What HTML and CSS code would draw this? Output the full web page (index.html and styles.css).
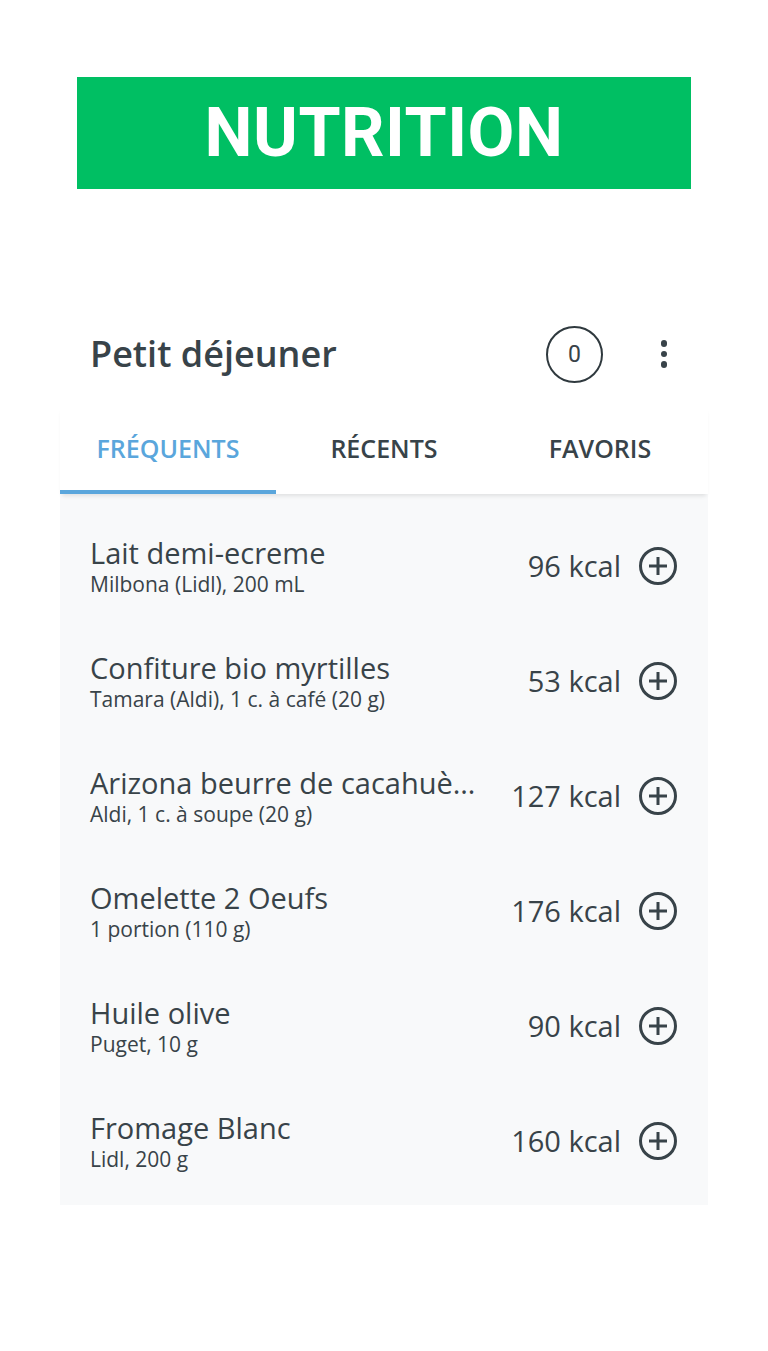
FILE: index.html
```html
<!DOCTYPE html>
<html lang="fr">
<head>
<meta charset="utf-8">
<link rel="stylesheet" href="styles.css">
</head>
<body>
<div class="page">
  <div class="banner">NUTRITION</div>
  <div class="card">
    <div class="card-head">
      <h1 class="title">Petit déjeuner</h1>
      <div class="count">0</div>
      <div class="kebab"><span></span><span></span><span></span></div>
    </div>
    <div class="tabs">
      <div class="tab active">FRÉQUENTS</div>
      <div class="tab">RÉCENTS</div>
      <div class="tab">FAVORIS</div>
    </div>
    <div class="list">
      <div class="row">
        <div class="info"><div class="name">Lait demi-ecreme</div><div class="sub">Milbona (Lidl), 200 mL</div></div>
        <div class="kcal">96 kcal</div>
        <svg class="plus" viewBox="0 0 40 40"><circle cx="20" cy="20" r="17.5"/><path d="M20 11v18M11 20h18"/></svg>
      </div>
      <div class="row">
        <div class="info"><div class="name">Confiture bio myrtilles</div><div class="sub">Tamara (Aldi), 1 c. à café (20 g)</div></div>
        <div class="kcal">53 kcal</div>
        <svg class="plus" viewBox="0 0 40 40"><circle cx="20" cy="20" r="17.5"/><path d="M20 11v18M11 20h18"/></svg>
      </div>
      <div class="row">
        <div class="info"><div class="name">Arizona beurre de cacahuète</div><div class="sub">Aldi, 1 c. à soupe (20 g)</div></div>
        <div class="kcal">127 kcal</div>
        <svg class="plus" viewBox="0 0 40 40"><circle cx="20" cy="20" r="17.5"/><path d="M20 11v18M11 20h18"/></svg>
      </div>
      <div class="row">
        <div class="info"><div class="name">Omelette 2 Oeufs</div><div class="sub">1 portion (110 g)</div></div>
        <div class="kcal">176 kcal</div>
        <svg class="plus" viewBox="0 0 40 40"><circle cx="20" cy="20" r="17.5"/><path d="M20 11v18M11 20h18"/></svg>
      </div>
      <div class="row">
        <div class="info"><div class="name">Huile olive</div><div class="sub">Puget, 10 g</div></div>
        <div class="kcal">90 kcal</div>
        <svg class="plus" viewBox="0 0 40 40"><circle cx="20" cy="20" r="17.5"/><path d="M20 11v18M11 20h18"/></svg>
      </div>
      <div class="row">
        <div class="info"><div class="name">Fromage Blanc</div><div class="sub">Lidl, 200 g</div></div>
        <div class="kcal">160 kcal</div>
        <svg class="plus" viewBox="0 0 40 40"><circle cx="20" cy="20" r="17.5"/><path d="M20 11v18M11 20h18"/></svg>
      </div>
    </div>
  </div>
</div>
</body>
</html>
```
FILE: styles.css
```css
* { box-sizing: border-box; }
html, body { margin: 0; padding: 0; background: #fff; }
body { font-family: "Open Sans", "Noto Sans", sans-serif; color: #384349; }
.page { width: 768px; height: 1351px; padding-top: 77px; display: flex; flex-direction: column; align-items: center; }
.banner {
  width: 614px; height: 112px; background: #00bf63; color: #fff;
  font-family: Roboto, sans-serif; font-weight: 700; font-size: 68px;
  display: flex; align-items: center; justify-content: center; letter-spacing: 0.5px;
}
.card { width: 648px; margin-top: 113px; }
.card-head { height: 104px; display: flex; align-items: center; padding: 0 40px 0 30px; margin-top: 0; }
.title { margin: 0; flex: 1; font-size: 36px; line-height: 50px; font-weight: 600; color: #384349; }
.count {
  width: 57px; height: 57px; border: 2px solid #2f393e; border-radius: 50%;
  display: flex; align-items: center; justify-content: center;
  font-family: Roboto, sans-serif; font-size: 23px; color: #384349; margin-right: 57px;
}
.kebab { width: 8px; display: flex; flex-direction: column; gap: 4px; align-items: center; }
.kebab span { width: 6.5px; height: 6.5px; border-radius: 50%; background: #384349; }
.tabs { display: flex; height: 88px; position: relative; z-index: 1; box-shadow: 0 4px 4px -2px rgba(0,0,0,0.10); background: #fff; }
.tab {
  flex: 1; display: flex; align-items: center; justify-content: center;
  font-size: 25px; font-weight: 600; color: #384349;
  border-bottom: 4px solid transparent;
}
.tab.active { color: #5aa6dc; border-bottom-color: #5aa6dc; }
.list { background: #f8f9fa; padding: 13px 0 8px; }
.row { height: 115px; display: flex; align-items: center; padding: 0 30px; }
.info { flex: 1; min-width: 0; }
.name {
  font-size: 29px; color: #384349; white-space: nowrap; overflow: hidden; text-overflow: ellipsis;
  max-width: 386px; line-height: 34px; padding: 3px 0;
}
.sub { font-size: 21px; color: #384349; line-height: 24px; margin-top: -1px; }
.kcal { font-size: 29px; color: #384349; margin-right: 17px; margin-top: 2px; }
.plus { width: 40px; height: 40px; fill: none; stroke: #384349; stroke-width: 3; margin-top: 2px; }
```
